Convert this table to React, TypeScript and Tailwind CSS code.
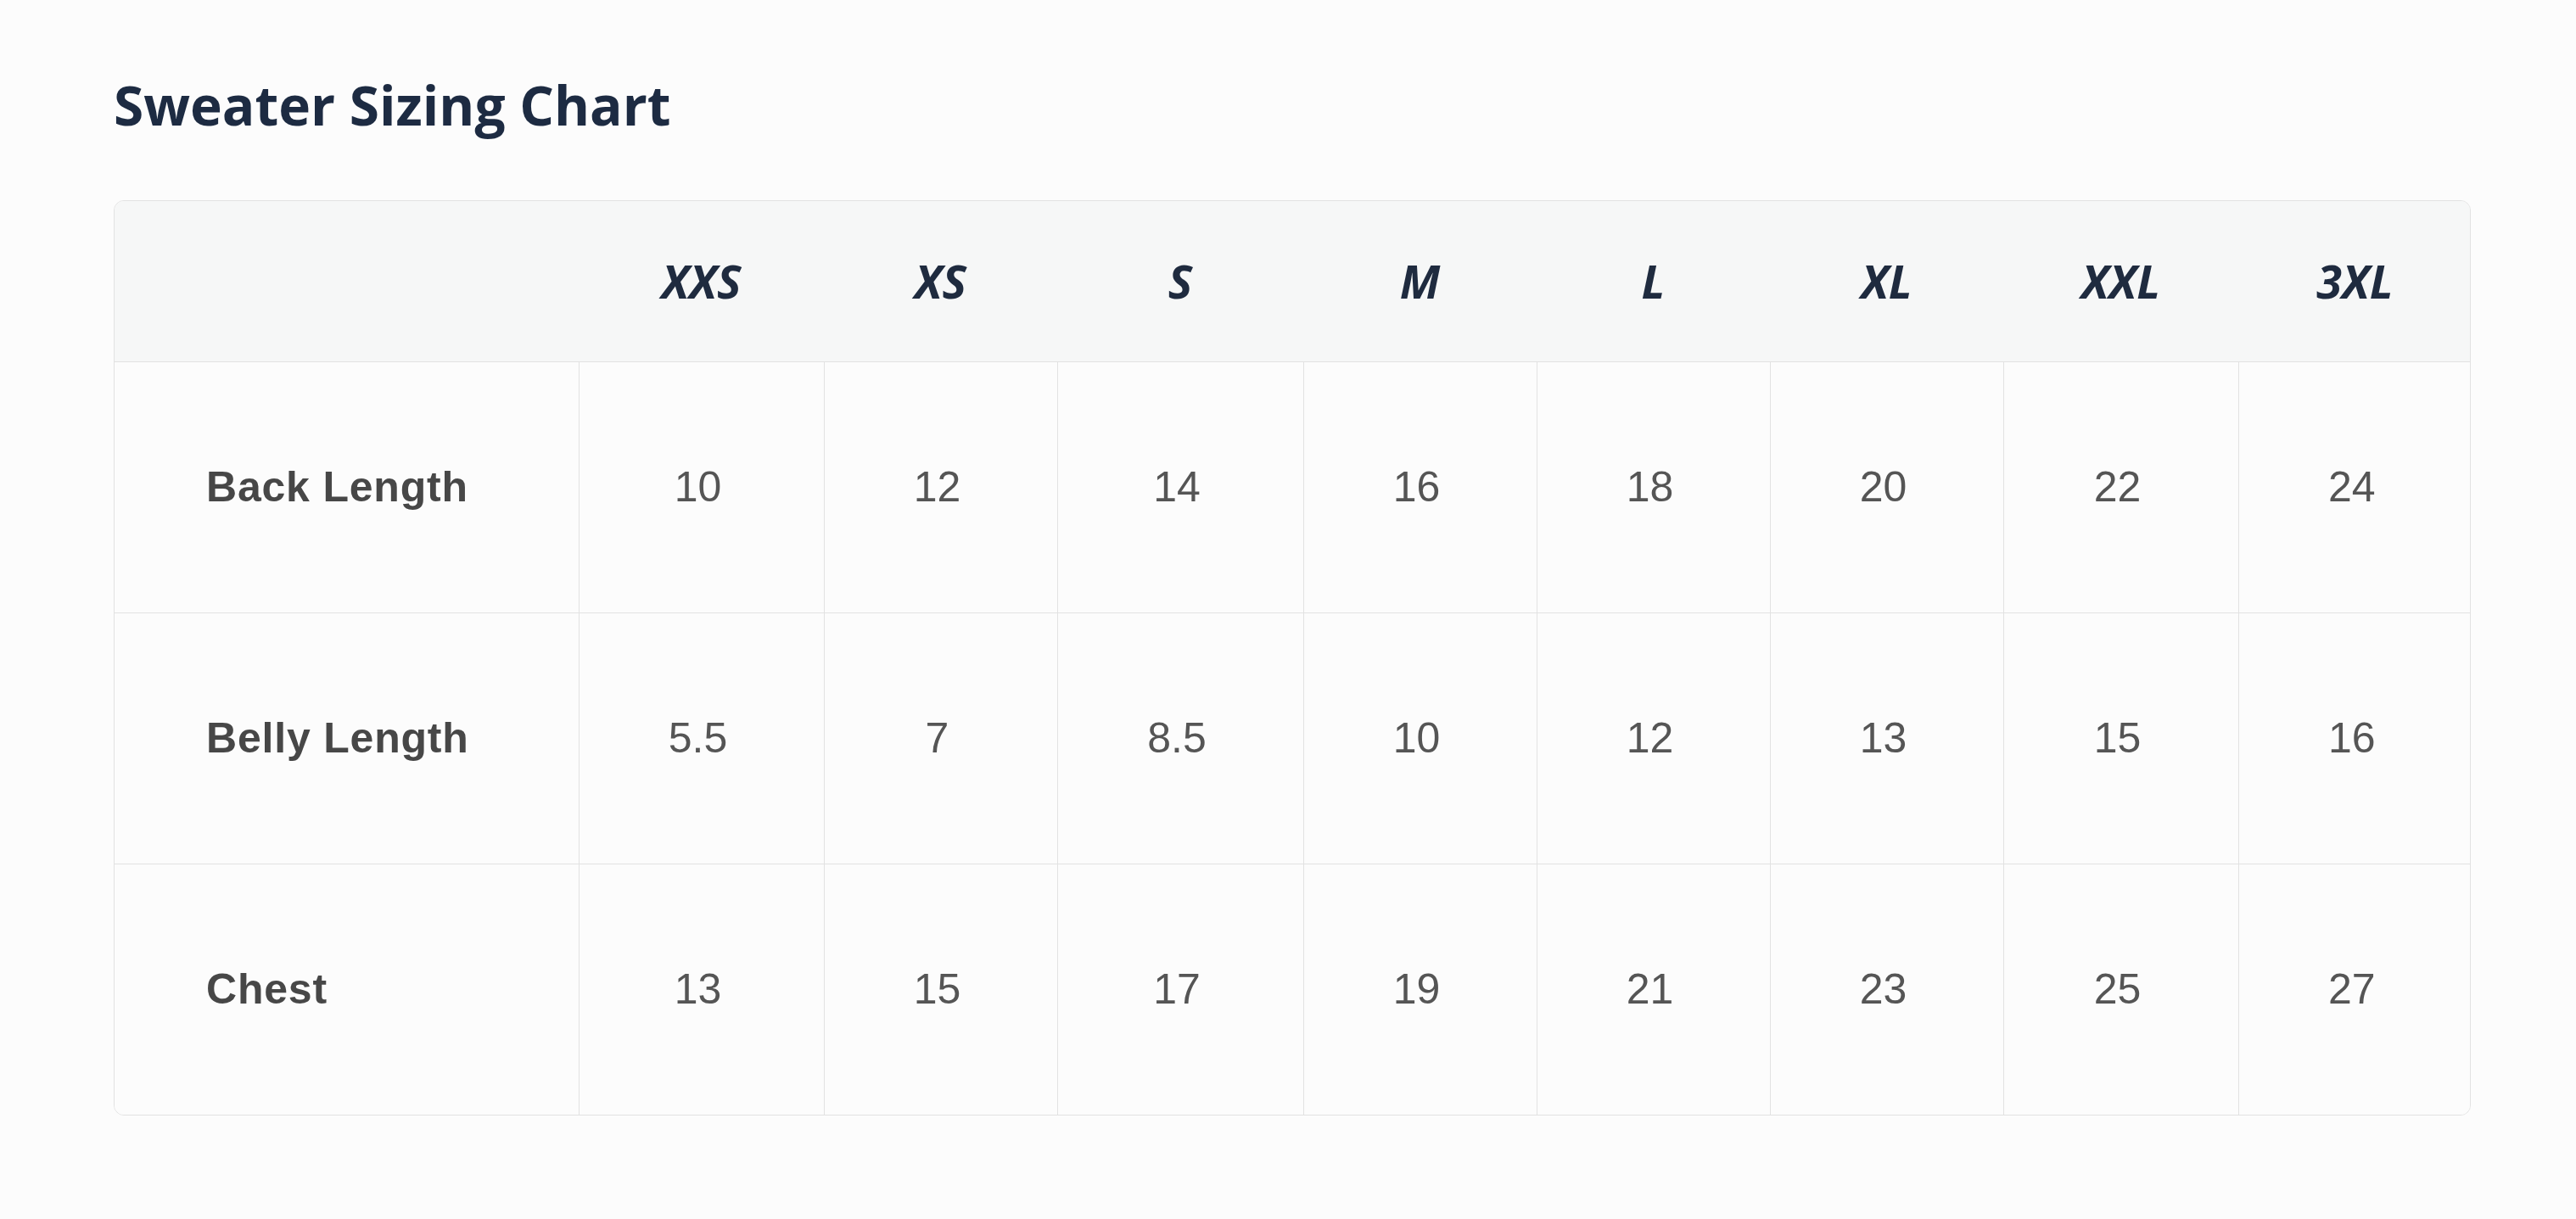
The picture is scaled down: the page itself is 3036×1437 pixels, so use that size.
import React from "react";

const sizes = ["XXS", "XS", "S", "M", "L", "XL", "XXL", "3XL"];
const colWidths = [547, 289, 275, 290, 275, 275, 275, 277, 275];
const rows: { label: string; values: string[] }[] = [
  { label: "Back Length", values: ["10", "12", "14", "16", "18", "20", "22", "24"] },
  { label: "Belly Length", values: ["5.5", "7", "8.5", "10", "12", "13", "15", "16"] },
  { label: "Chest", values: ["13", "15", "17", "19", "21", "23", "25", "27"] },
];

export default function App() {
  return (
    <div className="min-h-[1437px] w-full bg-[#fcfcfc] pl-[134px] pt-[92px]">
      <h1 className="m-0 font-['Open_Sans',sans-serif] text-[64px] font-bold leading-none text-[#1d2b42]">
        Sweater Sizing Chart
      </h1>
      <div className="mt-[80px] w-[2778px] overflow-hidden rounded-[12px] border border-[#e2e2e2]">
        <table className="w-full table-fixed border-collapse">
          <colgroup>
            {colWidths.map((w, i) => (
              <col key={i} style={{ width: w }} />
            ))}
          </colgroup>
          <thead>
            <tr className="h-[189px] bg-[#f6f7f7]">
              <th className="p-0"></th>
              {sizes.map((s) => (
                <th
                  key={s}
                  className="p-0 text-center font-['Open_Sans',sans-serif] text-[54px] font-bold italic text-[#1f2b3f]"
                >
                  {s}
                </th>
              ))}
            </tr>
          </thead>
          <tbody className="bg-[#fcfcfc]">
            {rows.map((r) => (
              <tr key={r.label} className="h-[296px] border-t border-[#e2e2e2]">
                <td className="pl-[108px] text-left font-['Liberation_Sans',Arial,sans-serif] text-[50px] font-bold tracking-[0.8px] text-[#474747]">
                  {r.label}
                </td>
                {r.values.map((v, i) => (
                  <td
                    key={i}
                    className="border-l border-[#e2e2e2] p-0 pr-[8px] text-center font-['Liberation_Sans',Arial,sans-serif] text-[50px] text-[#555555]"
                  >
                    {v}
                  </td>
                ))}
              </tr>
            ))}
          </tbody>
        </table>
      </div>
    </div>
  );
}
